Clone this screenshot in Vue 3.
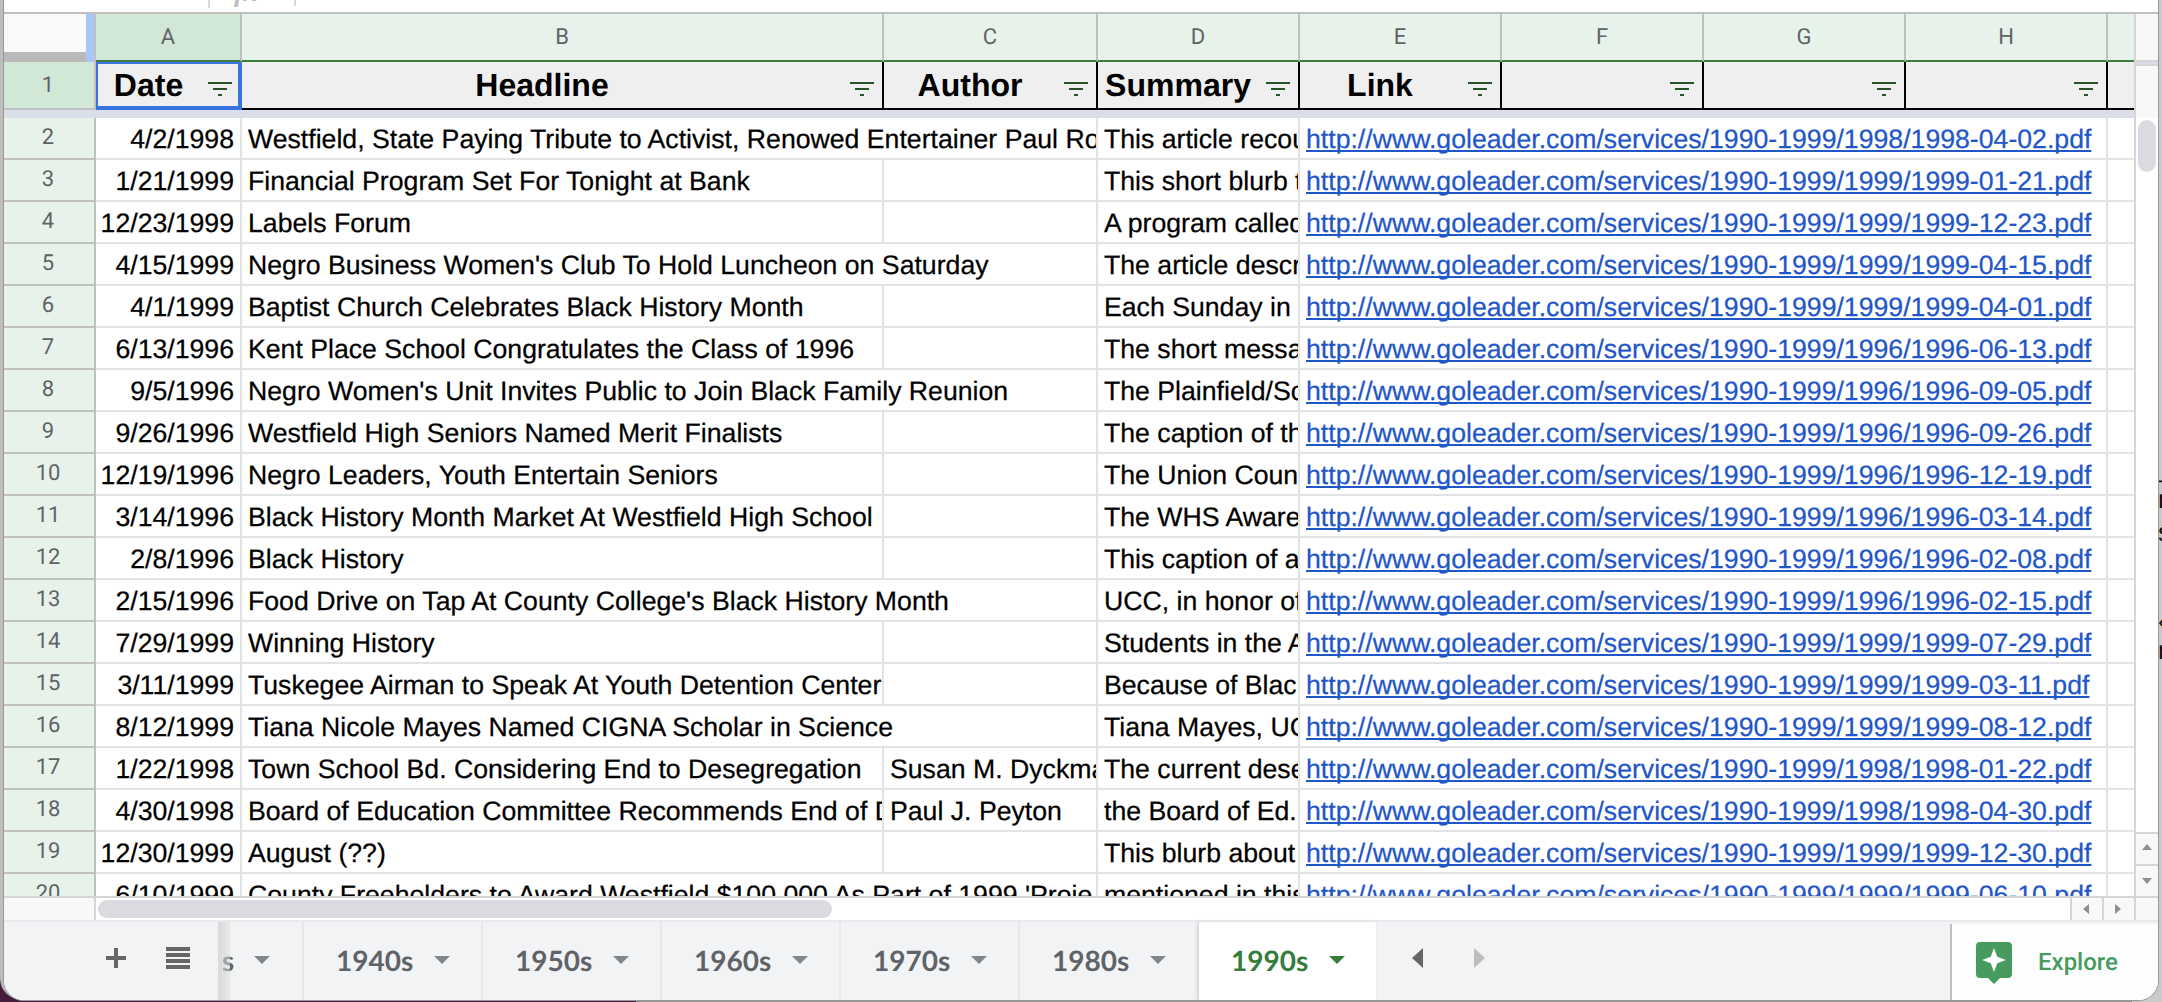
<script setup>
const base = 'http://www.goleader.com/services/1990-1999/'
const cols = ['A', 'B', 'C', 'D', 'E', 'F', 'G', 'H']
const heads = ['Date', 'Headline', 'Author', 'Summary', 'Link', '', '', '']
const rows = [
  ['4/2/1998', 'Westfield, State Paying Tribute to Activist, Renowed Entertainer Paul Ro', '', 'This article recou', '1998/1998-04-02', 1],
  ['1/21/1999', 'Financial Program Set For Tonight at Bank', '', 'This short blurb t', '1999/1999-01-21'],
  ['12/23/1999', 'Labels Forum', '', 'A program called', '1999/1999-12-23'],
  ['4/15/1999', "Negro Business Women's Club To Hold Luncheon on Saturday", '', 'The article descri', '1999/1999-04-15', 1],
  ['4/1/1999', 'Baptist Church Celebrates Black History Month', '', 'Each Sunday in', '1999/1999-04-01'],
  ['6/13/1996', 'Kent Place School Congratulates the Class of 1996', '', 'The short messa', '1996/1996-06-13'],
  ['9/5/1996', "Negro Women's Unit Invites Public to Join Black Family Reunion", '', 'The Plainfield/Sc', '1996/1996-09-05', 1],
  ['9/26/1996', 'Westfield High Seniors Named Merit Finalists', '', 'The caption of th', '1996/1996-09-26'],
  ['12/19/1996', 'Negro Leaders, Youth Entertain Seniors', '', 'The Union Coun', '1996/1996-12-19'],
  ['3/14/1996', 'Black History Month Market At Westfield High School', '', 'The WHS Aware', '1996/1996-03-14'],
  ['2/8/1996', 'Black History', '', 'This caption of a', '1996/1996-02-08'],
  ['2/15/1996', "Food Drive on Tap At County College's Black History Month", '', 'UCC, in honor of', '1996/1996-02-15', 1],
  ['7/29/1999', 'Winning History', '', 'Students in the A', '1999/1999-07-29'],
  ['3/11/1999', 'Tuskegee Airman to Speak At Youth Detention Center', '', 'Because of Blac', '1999/1999-03-11'],
  ['8/12/1999', 'Tiana Nicole Mayes Named CIGNA Scholar in Science', '', 'Tiana Mayes, UC', '1999/1999-08-12', 1],
  ['1/22/1998', 'Town School Bd. Considering End to Desegregation', 'Susan M. Dyckma', 'The current dese', '1998/1998-01-22'],
  ['4/30/1998', 'Board of Education Committee Recommends End of D', 'Paul J. Peyton', 'the Board of Ed.', '1998/1998-04-30'],
  ['12/30/1999', 'August (??)', '', 'This blurb about', '1999/1999-12-30'],
  ['6/10/1999', "County Freeholders to Award Westfield $100,000 As Part of 1999 'Proje", '', 'mentioned in this', '1999/1999-06-10', 1],
]
const tabs = ['1940s', '1950s', '1960s', '1970s', '1980s', '1990s']
</script>

<template>
  <div class="desktop">
    <div class="behind"><span class="b1">—</span><span class="b2">n</span><span class="b3">s</span><span class="b4">‹</span><span class="b5">n</span></div>
    <div class="window">
      <div class="formula"><i></i><span class="fx">fx</span><i></i></div>
      <div class="main">
        <div class="sheet">
          <div class="letters">
            <div class="corner"><div></div></div>
            <div v-for="(c, i) in cols" :key="c" class="letter" :class="'w' + i">{{ c }}</div>
            <div class="letter last"></div>
          </div>
          <div class="headrow">
            <div class="num sel">1</div>
            <div v-for="(h, i) in heads" :key="i" class="head" :class="'w' + i">
              {{ h }}
              <svg class="filter" width="24" height="14" viewBox="0 0 24 14"><path d="M0 0h24v2H0zM5 6h14v2H5zM10 12h4v2h-4z" fill="#275229" /></svg>
            </div>
            <div class="head last"></div>
          </div>
          <div class="freeze"></div>
          <div class="rows">
            <div v-for="(r, i) in rows" :key="i" class="row">
              <div class="num">{{ i + 2 }}</div>
              <div class="cell w0 date">{{ r[0] }}</div>
              <template v-if="r[5]"><div class="cell wide">{{ r[1] }}</div></template>
              <template v-else>
                <div class="cell w1">{{ r[1] }}</div>
                <div class="cell w2">{{ r[2] }}</div>
              </template>
              <div class="cell w3">{{ r[3] }}</div>
              <div class="cell link"><a>{{ base + r[4] }}.pdf</a></div>
              <div class="cell last"></div>
            </div>
          </div>
        </div>
        <div class="vscroll">
          <div class="vtop"></div>
          <div class="vmid"></div>
          <div class="thumb"></div>
          <div class="vbtn up"><svg width="10" height="6"><path d="M0 6L5 0L10 6z" fill="#8f8f8f" /></svg></div>
          <div class="vbtn"><svg width="10" height="6"><path d="M0 0H10L5 6z" fill="#8f8f8f" /></svg></div>
        </div>
      </div>
      <div class="hscroll">
        <div class="hcorner"></div>
        <div class="hthumb"></div>
        <div class="hbtn"><svg width="6" height="10"><path d="M6 0V10L0 5z" fill="#8f8f8f" /></svg></div>
        <div class="hbtn"><svg width="6" height="10"><path d="M0 0V10L6 5z" fill="#8f8f8f" /></svg></div>
        <div class="hend"></div>
      </div>
      <div class="tabbar">
        <div class="tools">
          <svg width="20" height="20"><path d="M8 0h4v8h8v4h-8v8h-4v-8h-8v-4h8z" fill="#666" /></svg>
          <svg width="24" height="22"><path d="M0 0h24v4H0zM0 6h24v4H0zM0 12h24v4H0zM0 18h24v4H0z" fill="#666" /></svg>
        </div>
        <div class="tab cut"><span>s</span><svg width="16" height="8"><path d="M0 0H16L8 8z" /></svg></div>
        <div v-for="t in tabs" :key="t" class="tab" :class="{ active: t === '1990s' }">
          <span>{{ t }}</span><svg width="16" height="8"><path d="M0 0H16L8 8z" /></svg>
        </div>
        <div class="navs">
          <svg width="11" height="20"><path d="M11 0V20L0 10z" fill="#666" /></svg>
          <svg width="11" height="20"><path d="M0 0V20L11 10z" fill="#bdbdbd" /></svg>
        </div>
        <div class="explore">
          <svg width="36" height="42" viewBox="0 0 36 42"><path d="M4 0H32Q36 0 36 4V32Q36 36 32 36H24L18 42L12 36H4Q0 36 0 32V4Q0 0 4 0z" fill="#479b5f" /><path d="M18 6L21.2 14.8L30 18L21.2 21.2L18 30L14.8 21.2L6 18L14.8 14.8z" fill="#fff" /></svg>
          <span>Explore</span>
        </div>
      </div>
    </div>
  </div>
</template>

<style>
body { margin: 0; overflow: hidden; }
</style>
<style scoped>
* { box-sizing: border-box; }
.desktop { position: relative; width: 2162px; height: 1002px; overflow: hidden; padding: 0 4px 2px; background: linear-gradient(90deg, #451d3c 636px, #919193 636px); font-family: "Liberation Sans", Arial, sans-serif; text-rendering: geometricPrecision; }
.desktop::before { content: ""; position: absolute; left: 0; top: 0; width: 30px; height: 1000px; background: #bdbdbd; border-radius: 0 0 0 22px; }
.behind { position: absolute; right: 0; top: 0; width: 30px; height: 1002px; background: #c9c9c9; overflow: hidden; font-size: 26px; color: #111; }
.behind span { position: absolute; left: 26px; line-height: 30px; }
.b1 { top: 464px; } .b2 { top: 484px; } .b3 { top: 517px; } .b4 { top: 606px; } .b5 { top: 635px; }
.window { position: relative; width: 2154px; height: 1000px; background: #fff; border-radius: 0 0 20px 20px; overflow: hidden; display: flex; flex-direction: column; box-shadow: 0 0 0 1px #999; }
.formula { height: 14px; border-bottom: 2px solid #c0c0c0; display: flex; padding-left: 204px; overflow: hidden; flex: none; }
.formula i { width: 2px; height: 8px; background: #d9d9d9; }
.formula i:last-child { height: 6px; }
.fx { width: 84px; padding-left: 24px; font: italic bold 28px/28px "Liberation Serif", serif; margin-top: -21px; color: #bdbdbd; }
.main { height: 884px; display: flex; flex: none; border-bottom: 2px solid #d5d5d5; }
.sheet { width: 2130px; overflow: hidden; }
.letters { display: flex; height: 48px; }
.corner { width: 92px; flex: none; background: #a9c6f8; border-right: 2px solid #c0c0c0; }
.corner div { width: 82px; height: 48px; background: #f8f9fb; border-bottom: 10px solid #b9b9b9; }
.w0 { width: 146px; } .w1 { width: 642px; } .w2 { width: 214px; } .w3, .w4, .w5, .w6, .w7 { width: 202px; }
.w0, .w1, .w2, .w3, .w4, .w5, .w6, .w7 { flex: none; }
.last { width: 26px; flex: none; border-right: 0 !important; }
.letter { height: 48px; border-right: 2px solid #c0c0c0; border-bottom: 2px solid #3a7d3f; background: #e7f3ea; text-align: center; font: 22px/48px Roboto, sans-serif; color: #5f6368; }
.letter.w0 { background: #d1e8d7; }
.headrow { display: flex; height: 48px; }
.num { width: 92px; height: 42px; flex: none; padding-right: 2px; background: #e7f3ea; border-right: 2px solid #c0c0c0; border-bottom: 2px solid #c0c0c0; text-align: center; font: 22px/39px Roboto, sans-serif; color: #5f6368; overflow: hidden; }
.num.sel { height: 48px; line-height: 48px; background: #d1e8d7; }
.head { position: relative; height: 48px; background: #efefef; border-right: 2px solid #000; border-bottom: 2px solid #000; padding-right: 40px; text-align: center; font-size: 32px; font-weight: bold; line-height: 47px; white-space: nowrap; }
.head.w0 { border: solid #3874e0; border-width: 2px 4px 4px 2px; padding-right: 39px; padding-left: 0; line-height: 43px; }
.filter { position: absolute; right: 8px; top: 20px; }
.head.w0 .filter { right: 6px; top: 18px; }
.freeze { height: 8px; background: #dadee8; }
.rows { height: 778px; overflow: hidden; }
.row { display: flex; height: 42px; }
.cell { height: 42px; flex: none; border-right: 2px solid #e2e3e3; border-bottom: 2px solid #e2e3e3; padding-left: 6px; font-size: 26.667px; line-height: 43px; white-space: pre; overflow: hidden; color: #000; -webkit-text-stroke: 0.25px; }
.date { padding: 0 6px 0 0; text-align: right; }
.wide { width: 856px; }
.link { width: 808px; }
.link a { color: #1f56c8; text-decoration: underline; text-decoration-thickness: 2px; text-underline-offset: 2px; text-decoration-skip-ink: none; }
.vscroll { width: 24px; border-left: 2px solid #d5d5d5; display: flex; flex-direction: column; }
.vtop { height: 52px; border-bottom: 2px solid #d5d5d5; background: linear-gradient(#f8f8f8 46px, #d5d5d5 46px 48px, #dadee8 48px); }
.vmid { height: 52px; background: #f8f8f8; }
.thumb { width: 18px; height: 52px; margin: 2px 0 0 2px; border-radius: 9px; background: #dadbe0; }
.vbtn { height: 32px; border-top: 2px solid #d5d5d5; background: #f8f8f8; display: flex; align-items: center; justify-content: center; flex: none; }
.vbtn.up { margin-top: auto; padding-bottom: 4px; }
.hscroll { height: 24px; flex: none; display: flex; border-bottom: 2px solid #e8eaed; }
.hcorner { width: 92px; background: #f8f8f8; border-right: 2px solid #d5d5d5; }
.hthumb { width: 734px; height: 18px; margin: 2px 0 0 2px; border-radius: 9px; background: #dadbe0; }
.hbtn { width: 32px; border-left: 2px solid #d5d5d5; background: #f8f8f8; display: flex; align-items: center; justify-content: center; padding-right: 2px; }
.hthumb + .hbtn { margin-left: auto; }
.hend { width: 24px; background: #f8f8f8; border-left: 2px solid #d5d5d5; }
.tabbar { height: 78px; flex: none; display: flex; background: #f1f3f5; }
.tools { width: 214px; display: flex; align-items: center; padding: 0 0 6px 102px; gap: 40px; }
.tab { width: 179px; padding: 2px 0 0 32px; border-right: 2px solid #e6e8ea; display: flex; align-items: center; flex: none; font: bold 28px Lato, sans-serif; color: #5f6368; }
.tab span { width: 98px; padding-bottom: 5px; }
.tab svg { fill: #80868b; margin-top: -4px; }
.tab.cut { width: 86px; padding-left: 4px; background: linear-gradient(90deg, #d9dbdc 4px, #dfe1e1 4px 8px, #e6e8e8 8px 12px, #f1f3f5 12px); }
.cut span { width: 32px; background: linear-gradient(90deg, #9fa1a4 8px, #5f6368 8px); background-clip: text; color: transparent; }
.tab.active { background: #fff; color: #357d3b; box-shadow: -2px 0 3px #d6d8da; border-right-color: #eceef0; }
.tab.active svg { fill: #357d3b; }
.navs { display: flex; align-items: center; padding: 0 0 6px 34px; gap: 51px; }
.explore { margin: 2px 0 0 auto; width: 208px; border-left: 2px solid #bdbfc1; background: #fcfdfd; display: flex; padding: 18px 0 0 24px; gap: 26px; color: #479b5f; font: 500 24px/40px Roboto, sans-serif; }
</style>
